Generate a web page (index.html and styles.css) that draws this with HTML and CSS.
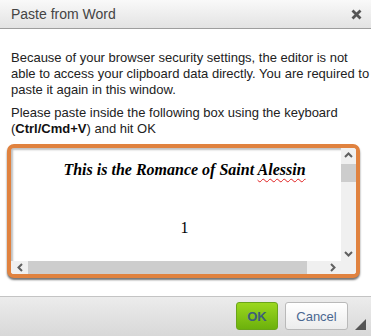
FILE: index.html
```html
<!DOCTYPE html>
<html>
<head>
<meta charset="utf-8">
<link rel="stylesheet" href="styles.css">
</head>
<body>
<div class="dialog">
  <div class="titlebar">
    <span class="title">Paste from Word</span>
    <span class="close"><svg width="11" height="11" viewBox="0 0 11 11"><path d="M1.5 1.5 L9.5 9.5 M9.5 1.5 L1.5 9.5" stroke="#555" stroke-width="2.8" fill="none"/></svg></span>
  </div>
  <div class="body">
    <p class="msg">Because of your browser security settings, the editor is not<br>able to access your clipboard data directly. You are required to<br>paste it again in this window.</p>
    <p class="msg">Please paste inside the following box using the keyboard<br>(<b>Ctrl/Cmd+V</b>) and hit OK</p>
    <div class="pastebox">
      <div class="doc">
        <div class="doc-title">This is the Romance of Saint <span class="misspelt">Alessin</span></div>
        <div class="doc-num">1</div>
      </div>
      <div class="vscroll">
        <span class="arrow"><svg width="9" height="6" viewBox="0 0 9 6"><path d="M1 5 L4.5 1.5 L8 5" stroke="#606060" stroke-width="2" fill="none"/></svg></span>
        <span class="vthumb"></span>
        <span class="vtrack"></span>
        <span class="arrow"><svg width="9" height="6" viewBox="0 0 9 6"><path d="M1 1 L4.5 4.5 L8 1" stroke="#606060" stroke-width="2" fill="none"/></svg></span>
      </div>
      <div class="hscroll">
        <span class="harrow"><svg width="6" height="9" viewBox="0 0 6 9"><path d="M5 1 L1.5 4.5 L5 8" stroke="#606060" stroke-width="2" fill="none"/></svg></span>
        <span class="hthumb"></span>
        <span class="htrack"></span>
        <span class="harrow"><svg width="6" height="9" viewBox="0 0 6 9"><path d="M1 1 L4.5 4.5 L1 8" stroke="#606060" stroke-width="2" fill="none"/></svg></span>
      </div>
      <div class="corner"></div>
    </div>
  </div>
  <div class="footer">
    <button class="btn btn-ok">OK</button>
    <button class="btn btn-cancel">Cancel</button>
    <span class="grip"></span>
  </div>
</div>
</body>
</html>
```
FILE: styles.css
```css
html, body {
  margin: 0;
  padding: 0;
  background: #fff;
}
.dialog {
  width: 371px;
  height: 336px;
  display: flex;
  flex-direction: column;
  font-family: "Liberation Sans", Arial, sans-serif;
  background: #fff;
  overflow: hidden;
}
.titlebar {
  height: 28px;
  border-bottom: 1px solid #9e9e9e;
  background: linear-gradient(#f9f9f9, #e3e3e3);
  display: flex;
  align-items: center;
  justify-content: space-between;
  padding: 0 9px 0 11px;
  flex: none;
}
.title {
  font-size: 14px;
  color: #444;
}
.close {
  display: flex;
}
.body {
  padding: 21px 0 0 0;
  flex: 1;
}
.msg {
  margin: 0 0 7px 11px;
  font-size: 13px;
  line-height: 16px;
  color: #222;
  white-space: nowrap;
}
.msg b {
  color: #111;
}
.pastebox {
  margin: 0 0 0 7px;
  width: 353px;
  height: 134px;
  box-sizing: border-box;
  border: 4px solid #e0823f;
  border-radius: 7px;
  box-shadow: 0 2px 2px rgba(0,0,0,0.55);
  display: grid;
  grid-template-columns: 1fr 15px;
  grid-template-rows: 1fr 13px;
  overflow: hidden;
  background: #fff;
}
.doc {
  box-shadow: inset 2px 2px 2px rgba(0,0,0,0.25);
  font-family: "Liberation Serif", "Times New Roman", serif;
  color: #000;
  text-align: center;
  padding-left: 17px;
}
.doc-title {
  font-size: 16px;
  font-weight: bold;
  font-style: italic;
  line-height: 18px;
  padding-top: 13px;
}
.misspelt {
  text-decoration: underline wavy #e02020;
  text-decoration-thickness: 1px;
  text-underline-offset: 3px;
}
.doc-num {
  font-size: 16px;
  line-height: 18px;
  padding-top: 40px;
}
.vscroll {
  background: #f0f0f0;
  display: flex;
  flex-direction: column;
  align-items: center;
}
.arrow {
  height: 14px;
  display: flex;
  align-items: center;
  justify-content: center;
  flex: none;
}
.vthumb {
  width: 100%;
  height: 18px;
  background: #cdcdcd;
  flex: none;
  margin-top: 2px;
}
.vtrack {
  flex: 1;
}
.hscroll {
  background: #f0f0f0;
  display: flex;
  align-items: stretch;
}
.harrow {
  width: 17px;
  display: flex;
  align-items: center;
  justify-content: center;
  flex: none;
}
.hthumb {
  width: 279px;
  background: #cdcdcd;
  flex: none;
}
.htrack {
  flex: 1;
}
.corner {
  background: #f0f0f0;
}
.footer {
  flex: none;
  height: 40px;
  box-sizing: border-box;
  border-top: 1px solid #c4c4c4;
  background: linear-gradient(#ececec, #d8d8d8);
  display: flex;
  align-items: flex-start;
  justify-content: flex-end;
  padding: 5px 5px 0 0;
}
.btn {
  height: 28px;
  box-sizing: border-box;
  border-radius: 3px;
  font-family: "Liberation Sans", Arial, sans-serif;
  font-size: 13px;
  padding: 0;
  margin: 0;
}
.btn-ok {
  width: 42px;
  border: 1px solid #6aa51a;
  background: linear-gradient(#9bd81f, #6cb10c);
  color: #3d5f7a;
  font-weight: bold;
}
.btn-cancel {
  width: 63px;
  margin-left: 7px;
  border: 1px solid #b9b9b9;
  background: linear-gradient(#ffffff, #ececec);
  color: #4a6791;
}
.grip {
  width: 0;
  height: 0;
  border-style: solid;
  border-width: 0 0 11px 11px;
  border-color: transparent transparent #555 transparent;
  margin: 17px 0 0 7px;
}
```
